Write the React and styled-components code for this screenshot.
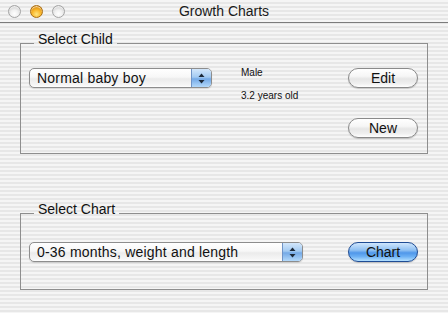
import React from 'react';
import styled, { createGlobalStyle } from 'styled-components';

const Global = createGlobalStyle`
  html, body { margin: 0; padding: 0; }
  body {
    width: 448px;
    height: 313px;
    overflow: hidden;
    font-family: "Liberation Sans", Arial, sans-serif;
    color: #111;
  }
`;

const stripes = `repeating-linear-gradient(180deg, #f5f5f5 0px, #f5f5f5 2px, #e7e7e7 2px, #e7e7e7 4px)`;

const Window = styled.div`
  width: 448px;
  height: 313px;
  box-sizing: border-box;
  background: ${stripes};
  display: flex;
  flex-direction: column;
`;

const TitleBar = styled.div`
  height: 23px;
  box-sizing: border-box;
  border-bottom: 1px solid #7c7c7c;
  display: grid;
  grid-template-columns: 1fr auto 1fr;
  align-items: center;
`;

const Lights = styled.div`
  display: flex;
  gap: 9px;
  padding-left: 8px;
`;

const Light = styled.span`
  width: 13px;
  height: 13px;
  box-sizing: border-box;
  border-radius: 50%;
  border: 1px solid ${p => (p.$active ? '#a96d10' : '#a4a4a4')};
  background: ${p =>
    p.$active
      ? 'radial-gradient(circle at 50% 75%, #ffe680 0%, #f9b62a 45%, #d98a08 80%, #b86e04 100%)'
      : 'radial-gradient(circle at 50% 70%, #ffffff 0%, #f0f0f0 40%, #d0d0d0 78%, #bdbdbd 100%)'};
  box-shadow: inset 0 1px 1px rgba(255, 255, 255, 0.7);
`;

const Title = styled.div`
  font-size: 14px;
  line-height: 16px;
  color: #1a1a1a;
`;

const Content = styled.div`
  padding: 0 20px;
  display: flex;
  flex-direction: column;
`;

const Group = styled.fieldset`
  margin: ${p => p.$top}px 0 0 0;
  border: 1px solid #8e8e8e;
  padding: ${p => p.$padTop}px 8px ${p => p.$padBottom}px 8px;
  min-width: 0;
`;

const Legend = styled.legend`
  margin-left: 5px;
  padding: 0 4px 9px 4px;
  font-size: 14px;
  line-height: 16px;
  color: #111;
`;

const Row = styled.div`
  display: flex;
  align-items: flex-start;
`;

const Popup = styled.div`
  width: ${p => p.$width}px;
  height: 20px;
  box-sizing: border-box;
  border: 1px solid #8d8d8d;
  border-radius: 5px;
  display: flex;
  overflow: hidden;
  background: linear-gradient(180deg, #ffffff 0%, #f7f7f7 45%, #ebebeb 55%, #f6f6f6 90%, #ffffff 100%);
  box-shadow: 0 1px 1px rgba(0, 0, 0, 0.12);
`;

const PopupLabel = styled.span`
  flex: 1;
  padding-left: 7px;
  font-size: 14px;
  line-height: 18px;
  letter-spacing: 0.2px;
  white-space: nowrap;
  color: #111;
`;

const PopupArrows = styled.span`
  width: 19px;
  border-left: 1px solid #6f93c6;
  display: flex;
  align-items: center;
  justify-content: center;
  background: linear-gradient(180deg, #d3e7fb 0%, #a3caf2 45%, #74a9e6 55%, #b3d9fb 100%);
`;

const Info = styled.div`
  margin: -2px 0 0 29px;
  flex: 1;
  display: flex;
  flex-direction: column;
  gap: 9px;
`;

const InfoLine = styled.span`
  font-size: 10px;
  line-height: 14px;
  color: #111;
`;

const ButtonCol = styled.div`
  display: flex;
  flex-direction: column;
  gap: 30px;
`;

const Spacer = styled.div`
  flex: 1;
`;

const Button = styled.button`
  width: 70px;
  height: 20px;
  margin: 0 1px 0 0;
  padding: 0;
  box-sizing: border-box;
  border-radius: 10px;
  font-family: "Liberation Sans", Arial, sans-serif;
  font-size: 14px;
  line-height: 18px;
  color: #111;
  border: 1px solid ${p => (p.$primary ? '#1f4c94' : '#8a8a8a')};
  background: ${p =>
    p.$primary
      ? 'linear-gradient(180deg, #cfe6fd 0%, #8fc0f2 40%, #4f97ea 55%, #6cb0f4 75%, #b4e0ff 100%)'
      : 'linear-gradient(180deg, #ffffff 0%, #f6f6f6 40%, #e6e6e6 55%, #efefef 80%, #ffffff 100%)'};
  box-shadow: 0 1px 1px rgba(0, 0, 0, 0.18);
`;

const Arrows = () => (
  <svg width="7" height="11" viewBox="0 0 7 11">
    <path d="M3.5 0.5 L6.5 4 L0.5 4 Z" fill="#1d2a3a" />
    <path d="M3.5 10.5 L6.5 7 L0.5 7 Z" fill="#1d2a3a" />
  </svg>
);

const PopupButton = ({ width, label }) => (
  <Popup $width={width}>
    <PopupLabel>{label}</PopupLabel>
    <PopupArrows>
      <Arrows />
    </PopupArrows>
  </Popup>
);

export default function App() {
  return (
    <>
      <Global />
      <Window>
        <TitleBar>
          <Lights>
            <Light />
            <Light $active />
            <Light />
          </Lights>
          <Title>Growth Charts</Title>
          <span />
        </TitleBar>
        <Content>
          <Group $top={8} $padTop={12} $padBottom={15}>
            <Legend>Select Child</Legend>
            <Row>
              <PopupButton width={183} label="Normal baby boy" />
              <Info>
                <InfoLine>Male</InfoLine>
                <InfoLine>3.2 years old</InfoLine>
              </Info>
              <ButtonCol>
                <Button>Edit</Button>
                <Button>New</Button>
              </ButtonCol>
            </Row>
          </Group>
          <Group $top={47} $padTop={16} $padBottom={27}>
            <Legend>Select Chart</Legend>
            <Row>
              <PopupButton width={274} label="0-36 months, weight and length" />
              <Spacer />
              <Button $primary>Chart</Button>
            </Row>
          </Group>
        </Content>
      </Window>
    </>
  );
}
